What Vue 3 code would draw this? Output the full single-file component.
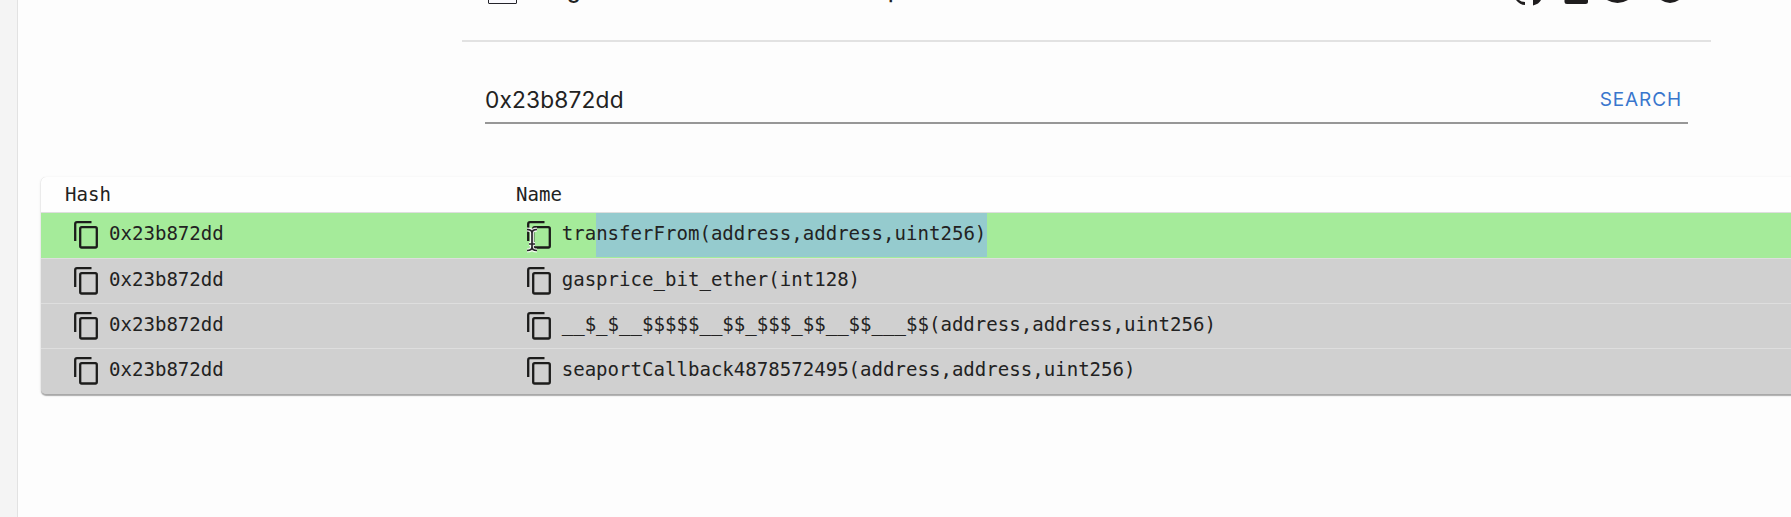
<script setup>
const rows = [
  { name: 'transferFrom(address,address,uint256)', plain: 'tra', selected: 'nsferFrom(address,address,uint256)', match: true },
  { name: 'gasprice_bit_ether(int128)', plain: 'gasprice_bit_ether(int128)' },
  { name: '__$_$__$$$$$__$$_$$$_$$__$$___$$(address,address,uint256)', plain: '__$_$__$$$$$__$$_$$$_$$__$$___$$(address,address,uint256)' },
  { name: 'seaportCallback4878572495(address,address,uint256)', plain: 'seaportCallback4878572495(address,address,uint256)' },
]
const hash = '0x23b872dd'
</script>

<template>
  <div class="page">
    <aside class="rail"></aside>
    <main class="main">
      <header class="header">
        <span class="logo"></span>
        <span class="title title-g">g</span>
        <span class="title title-p">p</span>
        <svg class="links" width="180" height="8" viewBox="0 0 180 8" fill="#1f1d1e">
          <path d="M4 0 Q8 5 13 5 V2 Q9 2 7 0Z" />
          <path d="M21 0 H29 Q27 4 21 5.5Z" />
          <path d="M52.5 0 H76 V1.5 Q76 4 73.500 4 H55 Q52.500 4 52.500 1.500Z" />
          <path d="M95 0 H116 Q105.500 6 95 0Z" />
          <path d="M149 0 H167 Q158 6 149 0Z" />
        </svg>
      </header>

      <div class="search">
        <span class="query">{{ hash }}</span>
        <button class="submit">SEARCH</button>
      </div>

      <section class="table">
        <div class="row head"><span class="col">Hash</span><span class="col">Name</span></div>
        <div v-for="r in rows" :key="r.name" class="row" :class="{ match: r.match }">
          <div class="cell col">
            <svg class="copy" width="24" height="28" viewBox="0 0 24 28" fill="none" stroke="#1c1c1b" stroke-width="2.300">
              <path d="M1.200 20V3Q1.200 1.200 3 1.200H17.500" />
              <rect x="6.200" y="6.200" width="16.600" height="20.300" rx="1.500" />
            </svg>
            <span class="signature">{{ hash }}</span>
          </div>
          <div class="cell col">
            <svg class="copy" width="24" height="28" viewBox="0 0 24 28" fill="none" stroke="#1c1c1b" stroke-width="2.300">
              <path d="M1.200 20V3Q1.200 1.200 3 1.200H17.500" />
              <rect x="6.200" y="6.200" width="16.600" height="20.300" rx="1.500" />
            </svg>
            <span class="signature">{{ r.plain }}<span v-if="r.selected" class="selected">{{ r.selected }}</span></span>
            <svg v-if="r.match" class="cursor" width="14" height="26" viewBox="0 0 14 26" fill="none">
              <path d="M2 2.500Q7 2.500 7 6Q7 2.500 12 2.500M7 5V21M2 23.500Q7 23.500 7 20Q7 23.500 12 23.500M4 17H10" stroke="#fff" stroke-opacity=".85" stroke-width="4" />
              <path d="M2 2.500Q7 2.500 7 6Q7 2.500 12 2.500M7 5V21M2 23.500Q7 23.500 7 20Q7 23.500 12 23.500M4 17H10" stroke="#29242b" stroke-width="1.700" />
            </svg>
          </div>
        </div>
      </section>
    </main>
  </div>
</template>

<style>
body { margin: 0; overflow: hidden; }
</style>

<style scoped>
* { box-sizing: border-box; }
.page { display: flex; width: 1791px; height: 517px; overflow: hidden; background: #fdfdfd; color: #222; font-family: Inter, sans-serif; }
.rail { flex: 0 0 18px; background: #f4f4f4; border-right: 1px solid #e2e2e2; }
.main { flex: 1; min-width: 0; }
.header { display: flex; align-items: flex-start; width: 1249px; height: 42px; margin-left: 444px; border-bottom: 2px solid #e2e2e2; overflow: hidden; }
.logo { width: 29px; height: 16px; margin: -12px 0 0 26px; border: 1.5px solid #24242a; border-radius: 1px; background: #fafafe; }
.title { flex-shrink: 0; width: 14px; margin-top: -24px; font-size: 22px; font-weight: 500; line-height: 28px; }
.title-g { margin-left: 50px; }
.title-p { margin-left: 307px; }
.links { margin-left: 610px; flex-shrink: 0; }
.search { display: flex; align-items: center; justify-content: space-between; width: 1203px; height: 50px; margin: 32px 0 0 467px; padding-top: 3px; border-bottom: 2px solid #979797; }
.query { font-size: 22.7px; letter-spacing: .18px; }
.submit { padding: 0; margin-right: 6px; border: 0; background: none; color: #3976cd; font: 400 19px Inter, sans-serif; letter-spacing: .9px; }
.table { width: 1900px; margin: 53px 0 0 23px; border-radius: 5px; overflow: hidden; background: #d0d0d0; box-shadow: 0 1.5px 1px rgba(0, 0, 0, .28), 0 1px 3px rgba(0, 0, 0, .12); font-family: "DejaVu Sans Mono", monospace; font-size: 19.07px; }
.row { display: grid; grid-template-columns: 452.700px 1fr; height: 45.4px; padding-left: 23px; background: #d0d0d0; border-top: 1.4px solid #dedede; }
.row.head { grid-template-columns: 451px 1fr; height: 35.3px; padding: 5px 0 0 24px; border-top: 0; background: #fefefe; line-height: 24px; }
.row.match { background: #a5eb9a; }
.cell { position: relative; display: flex; align-items: center; height: 44px; padding-left: 10px; }
.copy { flex-shrink: 0; margin-right: 11px; }
.signature { height: 44px; line-height: 41.5px; white-space: pre; }
.selected { display: inline-block; height: 44px; padding-right: 1px; background: #95cbce; vertical-align: top; }
.cursor { position: absolute; left: 8px; top: 14px; }
</style>
